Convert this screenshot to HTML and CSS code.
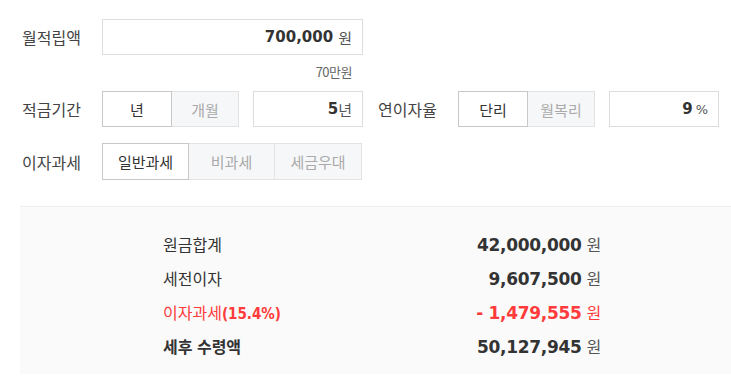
FILE: index.html
```html
<!DOCTYPE html>
<html lang="ko">
<head>
  <meta charset="UTF-8" />
  <title>적금 계산기</title>
  <link rel="stylesheet" href="styles.css">
</head>
<body>

<div class="calc">
  <!-- 월적립액 -->
  <div class="row">
    <span class="label">월적립액</span>
    <div class="field w-full"><strong>700,000</strong><em>원</em></div>
  </div>
  <div class="note">70만원</div>

  <!-- 적금기간 / 연이자율 -->
  <div class="row">
    <span class="label">적금기간</span>
    <div class="seg">
      <button class="on w70">년</button>
      <button class="w67">개월</button>
    </div>
    <div class="field w-small gap"><strong>5</strong><em class="tight">년</em></div>
    <span class="label label-r">연이자율</span>
    <div class="seg">
      <button class="on w70">단리</button>
      <button class="w67">월복리</button>
    </div>
    <div class="field w-small gap"><strong>9</strong><em class="pct">%</em></div>
  </div>

  <!-- 이자과세 -->
  <div class="row row-tax">
    <span class="label">이자과세</span>
    <div class="seg">
      <button class="on w87">일반과세</button>
      <button class="w86">비과세</button>
      <button class="w87">세금우대</button>
    </div>
  </div>
</div>

<div class="result">
  <ul class="sum">
    <li><span>원금합계</span><b>42,000,000<i>원</i></b></li>
    <li><span>세전이자</span><b>9,607,500<i>원</i></b></li>
    <li class="minus"><span>이자과세<small>(15.4%)</small></span><b>- 1,479,555<i>원</i></b></li>
    <li class="total"><span>세후 수령액</span><b>50,127,945<i>원</i></b></li>
  </ul>
</div>

</body>
</html>
```

FILE: styles.css
```css
body {
  margin: 0;
  background: #fff;
  font-family: "Noto Sans CJK KR", "Noto Sans", sans-serif;
  color: #333;
}
.calc { padding: 19px 0 0 22px; }
.row { display: flex; align-items: center; height: 36px; }
.label { width: 80px; font-size: 16px; color: #444; }
.label-r { margin-left: 15px; }
.field {
  box-sizing: border-box; height: 36px; border: 1px solid #ddd;
  display: flex; align-items: center; justify-content: flex-end;
  padding-right: 10px; background: #fff;
}
.field strong { font-family: "DejaVu Sans", sans-serif; font-weight: bold; font-size: 15px; color: #333; }
.field em { font-style: normal; font-size: 15px; color: #555; margin-left: 5px; }
.field em.tight { margin-left: 0; }
.field em.pct { font-family: "DejaVu Sans", sans-serif; font-size: 13px; margin-left: 3px; }
.w-full { width: 261px; }
.w-small { width: 110px; }
.gap { margin-left: 14px; }
.note {
  width: 261px; margin-left: 80px; box-sizing: border-box; padding-right: 11px;
  text-align: right; font-size: 13px; color: #666; letter-spacing: -0.5px;
  height: 36px; line-height: 34px;
}
.seg { display: flex; height: 36px; }
.seg button {
  box-sizing: border-box; height: 100%; margin: 0; padding: 0;
  font-family: inherit; font-size: 15px; color: #aaa;
  background: #f6f7f9; border: 1px solid #e3e3e3; border-left: none;
}
.seg button:first-child { border-left: 1px solid #e3e3e3; }
.seg button.on { background: #fff; color: #333; border: 1px solid #c8c8c8; }
.w70 { width: 70px; }
.w67 { width: 67px; }
.w87 { width: 87px; }
.w86 { width: 86px; }
.row-tax { margin-top: 16px; height: 37px; }
.row-tax .seg { height: 37px; }

.result {
  margin: 26px 0 0 20px; background: #fafafa; border-top: 1px solid #eee;
  padding: 20px 0 11px;
}
.sum { list-style: none; margin: 0 0 0 143px; padding: 0; width: 438px; }
.sum li { display: flex; justify-content: space-between; align-items: center; height: 34px; }
.sum span { font-size: 16px; color: #333; }
.sum b { font-family: "DejaVu Sans", sans-serif; font-size: 17px; font-weight: bold; color: #333; letter-spacing: -0.3px; }
.sum i { font-style: normal; font-family: "Noto Sans CJK KR", sans-serif; font-weight: normal; font-size: 16px; color: #555; margin-left: 5px; }
.sum small { font-family: "DejaVu Sans Condensed", "DejaVu Sans", sans-serif; font-size: 15px; font-weight: bold; }
.minus span, .minus b, .minus i { color: #ff3b3b; }
.total span { font-weight: bold; }
```
